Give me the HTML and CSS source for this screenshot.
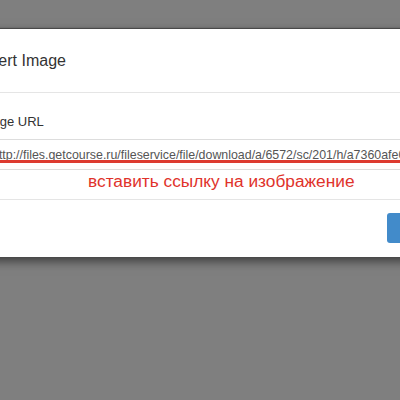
FILE: index.html
```html
<!DOCTYPE html>
<html>
<head>
<meta charset="utf-8">
<link rel="stylesheet" href="styles.css">
</head>
<body>
<div class="modal">
  <div class="modal-header">
    <h4 class="modal-title">Insert Image</h4>
  </div>
  <div class="modal-body">
    <label class="label">Image URL</label>
    <div class="input-wrap">
      <div class="input">http://files.getcourse.ru/fileservice/file/download/a/6572/sc/201/h/a7360afe0c1e2d</div>
    </div>
    <div class="note">вставить ссылку на изображение</div>
  </div>
  <div class="modal-footer">
    <button class="btn">Insert</button>
  </div>
</div>
</body>
</html>
```

FILE: styles.css
```css
html, body {
  margin: 0;
  padding: 0;
  height: 100%;
  overflow: hidden;
}
body {
  background: #7f7f7f;
  font-family: "Liberation Sans", Arial, sans-serif;
  color: #333;
}
.modal {
  margin-top: 29px;
  margin-left: -37px;
  width: 480px;
  background: #fff;
  box-shadow: 0 -1px 1px rgba(0,0,0,0.35), 0 4px 10px rgba(0,0,0,0.55);
}
.modal-header {
  height: 64px;
  box-sizing: border-box;
  padding: 0 15px;
  display: flex;
  align-items: center;
  border-bottom: 1px solid #e5e5e5;
}
.modal-title {
  margin: 0 0 0 -1px;
  font-size: 16px;
  font-weight: normal;
  color: #333;
}
.modal-body {
  padding: 20px 15px 8px;
  display: flex;
  flex-direction: column;
}
.label {
  line-height: 18px;
  font-size: 13px;
  color: #333;
}
.input-wrap {
  position: relative;
  margin-top: 8px;
}
.input {
  height: 31px;
  box-sizing: border-box;
  border: 1px solid #ddd;
  padding: 0 12px 0 13px;
  display: flex;
  align-items: center;
  font-size: 12.4px;
  color: #555;
  white-space: nowrap;
  overflow: hidden;
}
.input-wrap::after {
  content: "";
  position: absolute;
  left: 0;
  right: 0;
  top: 21px;
  height: 3px;
  background: #dd3b30;
}
.note {
  margin-top: 1px;
  line-height: 20px;
  padding-left: 110px;
  font-size: 17.3px;
  color: #e0332b;
}
.modal-footer {
  border-top: 1px solid #e5e5e5;
  padding: 13px 15px 14px;
  display: flex;
}
.btn {
  margin-left: 409px;
  height: 30px;
  padding: 0 12px 0 14px;
  border: none;
  border-radius: 3px;
  background: #428bca;
  color: #fff;
  font-family: inherit;
  font-size: 13px;
}
```
